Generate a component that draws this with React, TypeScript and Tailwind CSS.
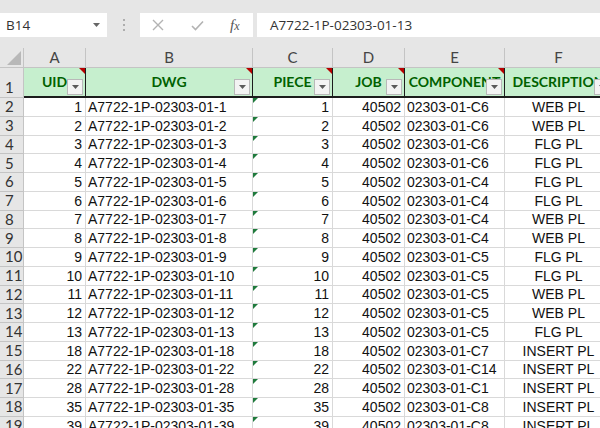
import React from "react";

type Row = [string, string, string, string, string, string];

const rows: Row[] = [
  ["1", "A7722-1P-02303-01-1", "1", "40502", "02303-01-C6", "WEB PL"],
  ["2", "A7722-1P-02303-01-2", "2", "40502", "02303-01-C6", "WEB PL"],
  ["3", "A7722-1P-02303-01-3", "3", "40502", "02303-01-C6", "FLG PL"],
  ["4", "A7722-1P-02303-01-4", "4", "40502", "02303-01-C6", "FLG PL"],
  ["5", "A7722-1P-02303-01-5", "5", "40502", "02303-01-C4", "FLG PL"],
  ["6", "A7722-1P-02303-01-6", "6", "40502", "02303-01-C4", "FLG PL"],
  ["7", "A7722-1P-02303-01-7", "7", "40502", "02303-01-C4", "WEB PL"],
  ["8", "A7722-1P-02303-01-8", "8", "40502", "02303-01-C4", "WEB PL"],
  ["9", "A7722-1P-02303-01-9", "9", "40502", "02303-01-C5", "FLG PL"],
  ["10", "A7722-1P-02303-01-10", "10", "40502", "02303-01-C5", "FLG PL"],
  ["11", "A7722-1P-02303-01-11", "11", "40502", "02303-01-C5", "WEB PL"],
  ["12", "A7722-1P-02303-01-12", "12", "40502", "02303-01-C5", "WEB PL"],
  ["13", "A7722-1P-02303-01-13", "13", "40502", "02303-01-C5", "FLG PL"],
  ["18", "A7722-1P-02303-01-18", "18", "40502", "02303-01-C7", "INSERT PL"],
  ["22", "A7722-1P-02303-01-22", "22", "40502", "02303-01-C14", "INSERT PL"],
  ["28", "A7722-1P-02303-01-28", "28", "40502", "02303-01-C1", "INSERT PL"],
  ["35", "A7722-1P-02303-01-35", "35", "40502", "02303-01-C8", "INSERT PL"],
  ["39", "A7722-1P-02303-01-39", "39", "40502", "02303-01-C8", "INSERT PL"],
];

// widths and alignment per column, written out in full for tailwind
const cols = [
  { letter: "A", title: "UID", w: "w-[62px]", align: "justify-end pr-[3px]", note: true },
  { letter: "B", title: "DWG", w: "w-[167px]", align: "justify-start pl-[2px]", note: true },
  { letter: "C", title: "PIECE", w: "w-[80px]", align: "justify-end pr-[3px]", note: true },
  { letter: "D", title: "JOB", w: "w-[72px]", align: "justify-end pr-[3px]", note: true },
  { letter: "E", title: "COMPONENT", w: "w-[100px]", align: "justify-start pl-[2px]", note: true },
  { letter: "F", title: "DESCRIPTION", w: "w-[108px]", align: "justify-center", note: false },
];

const lato = "font-['Lato','Noto_Sans',sans-serif]";
const arial = "font-['Liberation_Sans',Arial,sans-serif]";

function FilterButton() {
  return (
    <div className="absolute right-[2px] bottom-[1px] flex h-[16px] w-[16px] items-center justify-center border border-[#b9b9b9] bg-[#f3f3f3]">
      <svg width="7" height="4" viewBox="0 0 7 4">
        <polygon points="0,0 7,0 3.5,4" fill="#5a5a5a" />
      </svg>
    </div>
  );
}

function FormulaBar() {
  return (
    <div className="flex h-[48px] shrink-0 items-start bg-[#e6e6e6] pt-[13px]">
      {/* name box */}
      <div className="flex h-[24px] w-[107px] items-center justify-between bg-white pl-[6px] pr-[7px]">
        <span className="font-['Open_Sans',sans-serif] text-[13.5px] text-[#333]">B14</span>
        <svg width="7" height="4" viewBox="0 0 7 4">
          <polygon points="0,0 7,0 3.5,4" fill="#666" />
        </svg>
      </div>
      <div className="flex h-[24px] w-[33px] flex-col items-center justify-center gap-[3px]">
        <span className="h-[2px] w-[2px] rounded-full bg-[#9a9a9a]" />
        <span className="h-[2px] w-[2px] rounded-full bg-[#9a9a9a]" />
        <span className="h-[2px] w-[2px] rounded-full bg-[#9a9a9a]" />
      </div>
      {/* cancel / enter / fx */}
      <div className="flex h-[24px] w-[113px] items-center bg-white">
        <svg className="ml-[12px]" width="12" height="12" viewBox="0 0 12 12">
          <path d="M1 1 L11 11 M11 1 L1 11" stroke="#b3b3b3" strokeWidth="1.4" />
        </svg>
        <svg className="ml-[27px]" width="13" height="11" viewBox="0 0 13 11">
          <path d="M1 6 L4.5 9.5 L12 1.5" stroke="#b3b3b3" strokeWidth="1.6" fill="none" />
        </svg>
        <span className="ml-[26px] font-['Liberation_Serif',serif] text-[15px] italic leading-none text-[#555]">
          f<span className="text-[12px]">x</span>
        </span>
      </div>
      {/* formula input */}
      <div className="ml-[4px] flex h-[24px] flex-1 items-center bg-white pl-[13px]">
        <span className="font-['Open_Sans',sans-serif] text-[13.5px] text-[#333]">A7722-1P-02303-01-13</span>
      </div>
    </div>
  );
}

export default function App() {
  return (
    <div className="flex h-[428px] w-[600px] flex-col overflow-hidden bg-white">
      <FormulaBar />

      {/* column letters */}
      <div className="flex h-[20px] shrink-0 bg-[#e6e6e6]">
        <div className="relative w-[24px] shrink-0 border-r border-b border-[#c4c4c4]">
          <svg className="absolute right-[2px] bottom-[2px]" width="14" height="14" viewBox="0 0 14 14">
            <polygon points="14,0 14,14 0,14" fill="#b8b8b8" />
          </svg>
        </div>
        {cols.map((c) => (
          <div
            key={c.letter}
            className={`${c.w} flex shrink-0 items-center justify-center border-r border-b border-[#c4c4c4] ${lato} text-[15px] text-[#444]`}
          >
            {c.letter}
          </div>
        ))}
      </div>

      {/* header row 1 */}
      <div className="flex h-[30px] shrink-0">
        <div className={`flex w-[24px] shrink-0 items-end border-r border-b border-[#c4c4c4] bg-[#e6e6e6] pb-[2px] pl-[5px] ${lato} text-[15px] leading-none text-[#333]`}>
          1
        </div>
        {cols.map((c) => (
          <div
            key={c.letter}
            className={`${c.w} relative flex shrink-0 items-center justify-center overflow-hidden border-r border-b-2 border-[#1c1c1c] bg-[#c6efce] pb-[1px]`}
          >
            <span className={`whitespace-nowrap ${lato} text-[14px] font-bold text-[#006100]`}>{c.title}</span>
            <FilterButton />
            {c.note && (
              <svg className="absolute right-0 top-0" width="6" height="6" viewBox="0 0 6 6">
                <polygon points="0,0 6,0 6,6" fill="#b80000" />
              </svg>
            )}
          </div>
        ))}
      </div>

      {/* data rows */}
      {rows.map((r, i) => (
        <div key={i} className="flex h-[18.75px] shrink-0">
          <div className={`flex w-[24px] shrink-0 items-center border-r border-b border-[#c4c4c4] bg-[#e6e6e6] pl-[5px] ${lato} text-[15px] leading-none text-[#333]`}>
            {i + 2}
          </div>
          {cols.map((c, j) => (
            <div
              key={c.letter}
              className={`${c.w} relative flex shrink-0 items-center ${c.align} border-r border-b border-[#d9d9d9] ${arial} text-[14px] leading-none text-[#111]`}
            >
              {j === 2 && (
                <svg className="absolute left-0 top-0" width="5" height="5" viewBox="0 0 5 5">
                  <polygon points="0,0 5,0 0,5" fill="#1f7a3c" />
                </svg>
              )}
              <span className="whitespace-nowrap">{r[j]}</span>
            </div>
          ))}
        </div>
      ))}
    </div>
  );
}
